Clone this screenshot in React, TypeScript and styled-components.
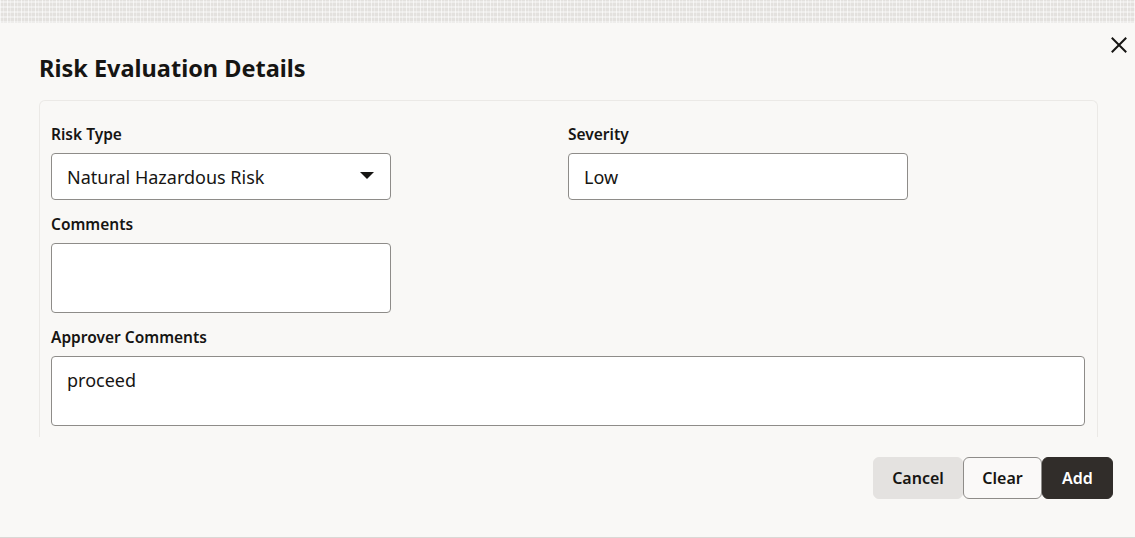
import React from "react";
import styled, { createGlobalStyle } from "styled-components";

const Global = createGlobalStyle`
  html, body { margin: 0; padding: 0; }
  body {
    font-family: "Noto Sans", "Open Sans", "Liberation Sans", sans-serif;
    color: #161513;
    background: #f9f8f6;
  }
  * { box-sizing: border-box; }
`;

const Page = styled.div`
  width: 1135px;
  height: 538px;
  display: flex;
  flex-direction: column;
  overflow: hidden;
`;

const Backdrop = styled.div`
  height: 23px;
  flex: none;
  background-color: #e3e1de;
  background-image:
    repeating-linear-gradient(90deg, rgba(255,255,255,0.6) 0 1px, transparent 1px 3px, rgba(255,255,255,0.35) 3px 4px, transparent 4px 7px),
    repeating-linear-gradient(0deg, rgba(255,255,255,0.4) 0 2px, transparent 2px 5px);
`;

const Dialog = styled.div`
  flex: 1;
  background: #f9f8f6;
  border-bottom: 1px solid #dad8d5;
  display: flex;
  flex-direction: column;
`;

const Header = styled.div`
  display: flex;
  justify-content: space-between;
  align-items: flex-start;
  padding: 0 4px 0 39px;
`;

const Title = styled.h1`
  margin: 0;
  padding-top: 30px;
  font-size: 23.5px;
  line-height: 30px;
  font-weight: 700;
  letter-spacing: 0;
`;

const CloseButton = styled.button`
  border: none;
  background: transparent;
  padding: 0;
  margin-top: 10px;
  width: 24px;
  height: 24px;
  display: flex;
  align-items: center;
  justify-content: center;
  color: #161513;
  cursor: pointer;
`;

const Panel = styled.div`
  margin: 17px 37px 0 39px;
  height: 337px;
  border: 1px solid #ebe9e6;
  border-bottom: none;
  border-radius: 6px 6px 0 0;
  padding: 23px 12px 0 11px;
  display: grid;
  grid-template-columns: 1fr 1fr;
  column-gap: 0;
  row-gap: 14px;
  align-content: start;
`;

const Field = styled.div<{ $span?: boolean }>`
  display: flex;
  flex-direction: column;
  grid-column: ${(p) => (p.$span ? "1 / -1" : "auto")};
`;

const Label = styled.label`
  font-size: 15.5px;
  line-height: 20px;
  font-weight: 600;
  margin-bottom: 9px;
`;

const Control = styled.div<{ $width?: string; $height: number }>`
  width: ${(p) => p.$width ?? "340px"};
  height: ${(p) => p.$height}px;
  background: #ffffff;
  border: 1px solid #8e8c89;
  border-radius: 4px;
  display: flex;
  align-items: ${(p) => (p.$height > 50 ? "flex-start" : "center")};
  justify-content: space-between;
  padding: ${(p) => (p.$height > 50 ? "11px 15px 0 15px" : "0 15px")};
  font-size: 18px;
  line-height: 24px;
  color: #161513;
`;

const Caret = styled.svg`
  width: 14px;
  height: 8px;
  margin-right: 1px;
  margin-bottom: 2px;
`;

const Footer = styled.div`
  display: flex;
  justify-content: flex-end;
  padding: 20px 22px 0 0;
`;

const Button = styled.button<{ $variant: "muted" | "outline" | "primary"; $w: number }>`
  width: ${(p) => p.$w}px;
  height: 42px;
  padding: 0;
  font-family: inherit;
  font-size: 16px;
  font-weight: 600;
  border-radius: 6px;
  cursor: pointer;
  border: 1px solid
    ${(p) =>
      p.$variant === "outline" ? "#8e8c89" : p.$variant === "primary" ? "#312d2a" : "#e4e2e0"};
  background: ${(p) =>
    p.$variant === "primary" ? "#312d2a" : p.$variant === "outline" ? "#faf9f8" : "#e4e2e0"};
  color: ${(p) => (p.$variant === "primary" ? "#ffffff" : "#161513")};
`;

export default function App() {
  return (
    <>
      <Global />
      <Page>
        <Backdrop />
        <Dialog>
          <Header>
            <Title>Risk Evaluation Details</Title>
            <CloseButton aria-label="Close">
              <svg width="16" height="16" viewBox="0 0 16 16">
                <path d="M1.5 1.5 L14.5 14.5 M14.5 1.5 L1.5 14.5" stroke="#161513" strokeWidth="2" strokeLinecap="square" />
              </svg>
            </CloseButton>
          </Header>
          <Panel>
            <Field>
              <Label>Risk Type</Label>
              <Control $height={47}>
                <span>Natural Hazardous Risk</span>
                <Caret viewBox="0 0 14 8">
                  <path d="M0 0 H14 L7 7 Z" fill="#161513" />
                </Caret>
              </Control>
            </Field>
            <Field>
              <Label>Severity</Label>
              <Control $height={47}>
                <span>Low</span>
              </Control>
            </Field>
            <Field $span>
              <Label>Comments</Label>
              <Control $height={70} />
            </Field>
            <Field $span>
              <Label>Approver Comments</Label>
              <Control $height={70} $width="1034px">
                <span>proceed</span>
              </Control>
            </Field>
          </Panel>
          <Footer>
            <Button $variant="muted" $w={90}>Cancel</Button>
            <Button $variant="outline" $w={79}>Clear</Button>
            <Button $variant="primary" $w={71}>Add</Button>
          </Footer>
        </Dialog>
      </Page>
    </>
  );
}
